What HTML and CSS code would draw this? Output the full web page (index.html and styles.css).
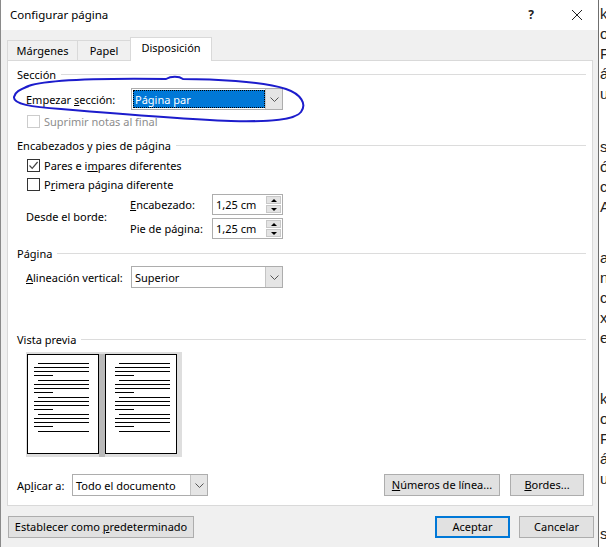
FILE: index.html
```html
<!DOCTYPE html>
<html lang="es">
<head>
  <meta charset="UTF-8" />
  <meta name="viewport" content="width=device-width, initial-scale=1" />
  <title>Configurar página</title>
  <link rel="stylesheet" href="styles.css">
</head>
<body>
  <div class="screen">
    <div class="dialog">
      <div class="titlebar">
        <span class="title">Configurar página</span>
        <span class="help">?</span>
        <svg class="close" width="12" height="12" viewBox="0 0 12 12">
          <path d="M1 1 L11 11 M11 1 L1 11" stroke="#222" stroke-width="1" fill="none"/>
        </svg>
      </div>

      <div class="dialog-body">
        <div class="tabs">
          <div class="tab tab-margins">Márgenes</div>
          <div class="tab tab-paper">Papel</div>
          <div class="tab tab-layout active">Disposición</div>
        </div>

        <div class="panel">
          <div class="group-title">Sección</div>
          <div class="field-row row-start">
            <span class="field-label">Empezar <u>s</u>ección:</span>
            <div class="combo combo-wide">
              <span class="combo-value selected">Página par</span>
              <span class="combo-btn">
                <svg width="9" height="5" viewBox="0 0 9 5"><path d="M0.5 0.5 L4.5 4.5 L8.5 0.5" stroke="#555" fill="none"/></svg>
              </span>
            </div>
          </div>
          <div class="check-row disabled row-suppress">
            <span class="box"></span>Suprimir notas al final
          </div>

          <div class="group-title gap-small">Encabezados y pies de página</div>
          <div class="check-row row-odd">
            <span class="box">
              <svg width="11" height="11" viewBox="0 0 11 11"><path d="M1.5 5.5 L4.2 8.3 L9.6 2" stroke="#444" stroke-width="1.2" fill="none"/></svg>
            </span>Pares e i<u>m</u>pares diferentes
          </div>
          <div class="check-row row-first">
            <span class="box"></span>P<u>r</u>imera página diferente
          </div>
          <div class="edge-grid">
            <span class="edge-label">Desde el borde:</span>
            <span class="spin-label"><u>E</u>ncabezado:</span>
            <div class="spin">
              <span class="spin-value">1,25 cm</span>
              <span class="spin-btns">
                <span class="spin-up"></span>
                <span class="spin-down"></span>
              </span>
            </div>
            <span class="spin-label">Pie de pá<u>g</u>ina:</span>
            <div class="spin">
              <span class="spin-value">1,25 cm</span>
              <span class="spin-btns">
                <span class="spin-up"></span>
                <span class="spin-down"></span>
              </span>
            </div>
          </div>

          <div class="group-title gap-small">Página</div>
          <div class="field-row row-align">
            <span class="field-label"><u>A</u>lineación vertical:</span>
            <div class="combo combo-wide">
              <span class="combo-value">Superior</span>
              <span class="combo-btn">
                <svg width="9" height="5" viewBox="0 0 9 5"><path d="M0.5 0.5 L4.5 4.5 L8.5 0.5" stroke="#555" fill="none"/></svg>
              </span>
            </div>
          </div>

          <div class="group-title gap-preview">Vista previa</div>
          <div class="preview">
            <div class="page page-left">
              <div class="para"><i class="ln lead"></i><i class="ln"></i><i class="ln"></i><i class="ln tail"></i></div>
              <div class="para"><i class="ln lead"></i><i class="ln"></i><i class="ln"></i><i class="ln tail"></i></div>
              <div class="para"><i class="ln lead"></i><i class="ln"></i><i class="ln"></i><i class="ln tail"></i></div>
              <div class="para"><i class="ln lead"></i><i class="ln"></i><i class="ln"></i><i class="ln tail"></i></div>
              <div class="para"><i class="ln lead"></i></div>
            </div>
            <div class="gutter"></div>
            <div class="page page-right">
              <div class="para"><i class="ln lead"></i><i class="ln"></i><i class="ln"></i><i class="ln tail"></i></div>
              <div class="para"><i class="ln lead"></i><i class="ln"></i><i class="ln"></i><i class="ln tail"></i></div>
              <div class="para"><i class="ln lead"></i><i class="ln"></i><i class="ln"></i><i class="ln tail"></i></div>
              <div class="para"><i class="ln lead"></i><i class="ln"></i><i class="ln"></i><i class="ln tail"></i></div>
              <div class="para"><i class="ln lead"></i></div>
            </div>
          </div>

          <div class="apply-row">
            <span class="apply-label">Ap<u>l</u>icar a:</span>
            <div class="combo combo-apply">
              <span class="combo-value">Todo el documento</span>
              <span class="combo-btn">
                <svg width="9" height="5" viewBox="0 0 9 5"><path d="M0.5 0.5 L4.5 4.5 L8.5 0.5" stroke="#555" fill="none"/></svg>
              </span>
            </div>
            <button class="btn btn-lines"><u>N</u>úmeros de línea...</button>
            <button class="btn btn-borders"><u>B</u>ordes...</button>
          </div>
        </div>

        <div class="footer">
          <button class="btn btn-default">Establecer como <u>p</u>redeterminado</button>
          <button class="btn btn-ok">Aceptar</button>
          <button class="btn btn-cancel">Cancelar</button>
        </div>
      </div>

      <svg class="scribble" width="320" height="130" viewBox="0 0 320 130">
        <path d="M25 87 C40 80 90 78 165 79 C170 76 178 76 182 79 C210 79 260 81 285 89 C300 94 306 104 300 112 C294 120 270 122 230 121 C180 119 120 114 60 109 C30 107 12 104 13 97 C14 92 18 90 28 86" stroke="#1c1ccc" stroke-width="2" fill="none" stroke-linecap="round"/>
      </svg>
    </div>

    <div class="doc">
      <div class="doc-group g1"><p>k</p><p>o</p><p>F</p><p>á</p><p>u</p></div>
      <div class="doc-group g2"><p>s</p><p>ó</p><p>c</p><p>A</p></div>
      <div class="doc-group g3"><p>a</p><p>n</p><p>c</p><p>x</p><p>e</p></div>
      <div class="doc-group g4"><p>k</p><p>o</p><p>F</p><p>á</p><p>u</p></div>
      <div class="doc-group g5"><p>s</p></div>
    </div>
  </div>
</body>
</html>
```

FILE: styles.css
```css
body {
  margin: 0;
  font-family: "Segoe UI", "Noto Sans", sans-serif;
  font-size: 11px;
  color: #000;
  background: #fff;
  white-space: nowrap;
}
u {
  text-decoration: underline;
  text-underline-offset: 1px;
}
.screen {
  display: flex;
  width: 606px;
  height: 547px;
  overflow: hidden;
}
.dialog {
  position: relative;
  width: 599px;
  height: 547px;
  box-sizing: border-box;
  border-left: 1px solid #8a8a8a;
  border-right: 1px solid #6f6f6f;
  background: #f0f0f0;
  flex-shrink: 0;
}

/* title bar */
.titlebar {
  display: flex;
  align-items: center;
  height: 30px;
  background: #fff;
  padding-left: 9px;
  padding-bottom: 1px;
  box-sizing: border-box;
}
.title {
  font-size: 11.5px;
  flex: 1;
}
.help {
  font-size: 12px;
  font-weight: bold;
  color: #222;
  margin-right: 37px;
}
.close {
  margin-right: 15px;
}

/* tabs */
.tabs {
  display: flex;
  align-items: flex-end;
  height: 30px;
  padding-left: 6px;
}
.tab {
  box-sizing: border-box;
  height: 20px;
  border: 1px solid #d9d9d9;
  border-bottom: none;
  margin-right: -1px;
  display: flex;
  align-items: center;
  justify-content: center;
  background: #f0f0f0;
  padding-bottom: 1px;
}
.tab-margins { width: 71px; }
.tab-paper { width: 54px; }
.tab-layout { width: 82px; }
.tab.active {
  height: 24px;
  margin-bottom: -1px;
  background: #fff;
  position: relative;
  z-index: 1;
  padding-bottom: 4px;
}

/* panel */
.panel {
  margin-left: 6px;
  width: 586px;
  height: 446px;
  box-sizing: border-box;
  border: 1px solid #d9d9d9;
  background: #fff;
  padding: 5px 6px 0 9px;
  display: flex;
  flex-direction: column;
}
.group-title {
  display: flex;
  align-items: center;
  height: 16px;
}
.group-title::after {
  content: "";
  flex: 1;
  height: 1px;
  background: #dcdcdc;
  margin-left: 5px;
  margin-top: 1px;
}
.gap-small { margin-top: 6px; }
.gap-preview { margin-top: 43px; }

.field-row {
  display: flex;
  align-items: center;
  height: 22px;
  padding-left: 9px;
}
.row-start { margin-top: 6px; }
.row-align { margin-top: 5px; }
.field-label {
  width: 105px;
}

/* combo boxes */
.combo {
  display: flex;
  box-sizing: border-box;
  height: 22px;
  border: 1px solid #adadad;
  background: #fff;
}
.combo-wide { width: 152px; }
.combo-apply { width: 136px; }
.combo-value {
  flex: 1;
  display: flex;
  align-items: center;
  padding-left: 3px;
}
.combo-value.selected {
  margin: 1px 0 1px 1px;
  padding-left: 2px;
  background: #0078d7;
  color: #fff;
  outline: 1px dotted #000;
  outline-offset: -1px;
}
.combo-btn {
  width: 16px;
  display: flex;
  align-items: center;
  justify-content: center;
  background: #e5e5e5;
  border-left: 1px solid #c4c4c4;
}

/* checkboxes */
.check-row {
  display: flex;
  align-items: center;
  height: 19px;
  padding-left: 10px;
}
.row-suppress { height: 20px; margin-top: 1px; }
.row-odd { height: 20px; margin-top: 2px; }
.box {
  width: 13px;
  height: 13px;
  box-sizing: border-box;
  border: 1px solid #333;
  margin-right: 4px;
  background: #fff;
  display: flex;
  align-items: center;
  justify-content: center;
}
.check-row.disabled {
  color: #8d8d8d;
}
.check-row.disabled .box {
  border-color: #cccccc;
}

/* header / footer distances */
.edge-grid {
  display: grid;
  grid-template-columns: 104px 82px 71px;
  grid-template-rows: 21px 21px;
  row-gap: 3px;
  align-items: center;
  padding-left: 9px;
}
.edge-label {
  grid-row: 1 / 3;
}
.spin {
  display: flex;
  box-sizing: border-box;
  height: 21px;
  border: 1px solid #adadad;
  background: #fff;
}
.spin-value {
  flex: 1;
  display: flex;
  align-items: center;
  padding-left: 3px;
}
.spin-btns {
  width: 15px;
  display: flex;
  flex-direction: column;
  padding: 1px 1px 1px 0;
  gap: 1px;
}
.spin-up,
.spin-down {
  flex: 1;
  background: #e3e3e3;
  border: 1px solid #c8c8c8;
  display: flex;
  align-items: center;
  justify-content: center;
}
.spin-up::after {
  content: "";
  border-left: 3px solid transparent;
  border-right: 3px solid transparent;
  border-bottom: 3px solid #000;
}
.spin-down::after {
  content: "";
  border-left: 3px solid transparent;
  border-right: 3px solid transparent;
  border-top: 3px solid #000;
}

/* preview */
.preview {
  display: flex;
  width: 156px;
  height: 105px;
  box-sizing: border-box;
  margin-top: 5px;
  margin-left: 9px;
  padding: 2px 0 0 1px;
  background: #dedede;
}
.gutter {
  width: 6px;
  height: 103px;
  background: #b9b9b9;
}
.page {
  width: 72px;
  height: 100px;
  box-sizing: border-box;
  border: 1px solid #000;
  background: #fff;
  padding-top: 8px;
  overflow: hidden;
}
.page-left { padding-left: 6px; }
.page-right { padding-left: 9px; }
.para {
  width: 55px;
  margin-bottom: 4px;
}
.ln {
  display: block;
  height: 1px;
  margin-bottom: 3px;
  background: #000;
}
.ln.lead { margin-left: 4px; }
.ln.tail { width: 19px; }

/* apply row */
.apply-row {
  display: flex;
  align-items: center;
  height: 22px;
  margin-top: 17px;
}
.apply-label {
  width: 55px;
}
.btn {
  box-sizing: border-box;
  height: 22px;
  border: 1px solid #adadad;
  background: #e1e1e1;
  font-family: inherit;
  font-size: 11px;
  color: #000;
  padding: 0 0 1px;
  white-space: nowrap;
}
.btn-lines {
  width: 116px;
  margin-left: auto;
}
.btn-borders {
  width: 74px;
  margin-left: 10px;
  margin-right: 2px;
}

/* footer */
.footer {
  display: flex;
  align-items: center;
  padding: 10px 4px 0 7px;
}
.btn-default {
  width: 186px;
}
.btn-ok {
  width: 75px;
  margin-left: auto;
  border: 2px solid #0078d7;
}
.btn-cancel {
  width: 75px;
  margin-left: 9px;
}

/* hand drawn mark over the dialog */
.scribble {
  position: absolute;
  left: 0;
  top: 0;
  pointer-events: none;
}

/* document behind the dialog */
.doc {
  flex: 1;
  overflow: hidden;
  padding-left: 1px;
  font-family: "Liberation Sans", sans-serif;
  font-size: 15px;
  color: #222;
}
.doc p {
  margin: 0;
  height: 20px;
  line-height: 20px;
}
.g1 { margin-top: 4px; }
.g2 { margin-top: 33px; }
.g3 { margin-top: 31px; }
.g4 { margin-top: 41px; }
.g5 { margin-top: 35px; }
```
